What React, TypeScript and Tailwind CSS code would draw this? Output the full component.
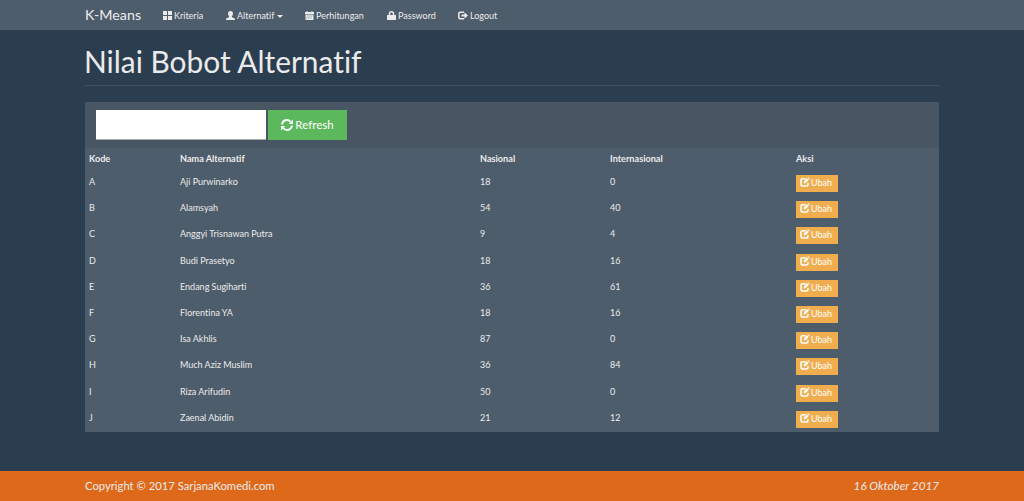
import React from 'react';

const rows: [string, string, number, number][] = [
  ['A', 'Aji Purwinarko', 18, 0],
  ['B', 'Alamsyah', 54, 40],
  ['C', 'Anggyi Trisnawan Putra', 9, 4],
  ['D', 'Budi Prasetyo', 18, 16],
  ['E', 'Endang Sugiharti', 36, 61],
  ['F', 'Florentina YA', 18, 16],
  ['G', 'Isa Akhlis', 87, 0],
  ['H', 'Much Aziz Muslim', 36, 84],
  ['I', 'Riza Arifudin', 50, 0],
  ['J', 'Zaenal Abidin', 21, 12],
];

function GridIcon() {
  return (
    <svg viewBox="0 0 18 18" className="h-[9px] w-[9px]" fill="currentColor">
      <path d="M0 0h8v8H0zM10 0h8v8h-8zM0 10h8v8H0zM10 10h8v8h-8z" />
    </svg>
  );
}

function UserIcon() {
  return (
    <svg viewBox="0 0 18 18" className="h-[9px] w-[9px]" fill="currentColor">
      <path d="M9 0c3.400 0 5 2 5 5 0 2.500-1 4.200-2.200 5.300v1.400c0 .8.500 1.200 1.300 1.500l3.600 1.400c.9.400 1.300 1 1.300 2V18H0v-1.400c0-1 .4-1.600 1.300-2l3.600-1.400c.8-.3 1.300-.7 1.300-1.500v-1.400C5 9.200 4 7.500 4 5c0-3 1.600-5 5-5z" />
    </svg>
  );
}

function CalendarIcon() {
  return (
    <svg viewBox="0 0 18 18" className="h-[9px] w-[9px]" fill="currentColor">
      <path d="M3 0h2v2h8V0h2v2h3v4H0V2h3z" />
      <path fillRule="evenodd" d="M1 7h16v11H1zM5 9v2h1.500V9zM9 9v2h1.500V9zM13 9v2h1.500V9zM3 13v2h1.500v-2zM7 13v2h1.500v-2zM11 13v2h1.500v-2z" />
    </svg>
  );
}

function LockIcon() {
  return (
    <svg viewBox="0 0 18 18" className="h-[9px] w-[9px]" fill="currentColor">
      <path fillRule="evenodd" d="M3.500 8V5.500a5.500 5.500 0 0 1 11 0V8H17a1 1 0 0 1 1 1v8a1 1 0 0 1-1 1H1a1 1 0 0 1-1-1V9a1 1 0 0 1 1-1zM6.500 8h5V5.500a2.500 2.500 0 0 0-5 0z" />
    </svg>
  );
}

function LogoutIcon() {
  return (
    <svg viewBox="0 0 20 18" className="h-[9px] w-[10px]" fill="currentColor">
      <path d="M12 1H4.500A4.500 4.500 0 0 0 0 5.500v7A4.500 4.500 0 0 0 4.500 17H12v-3H5a2 2 0 0 1-2-2V6a2 2 0 0 1 2-2h7zM13 2.500 20 9l-7 6.500V11H7V7h6z" />
    </svg>
  );
}

function RefreshIcon() {
  return (
    <svg viewBox="0 0 22 22" className="h-[12px] w-[12px]" fill="none" stroke="currentColor" strokeWidth="3.400">
      <path d="M2 10A8.800 8.800 0 0 1 17.500 5M20 12A8.800 8.800 0 0 1 4.500 17" />
      <path d="M22 1v8h-8zM0 21v-8h8z" fill="currentColor" stroke="none" />
    </svg>
  );
}

function EditIcon() {
  return (
    <svg viewBox="0 0 20 20" className="h-[10px] w-[10px]" fill="none" stroke="currentColor">
      <path d="M11.500 3.500H5a3 3 0 0 0-3 3V15a3 3 0 0 0 3 3h8a3 3 0 0 0 3-3v-3" strokeWidth="3" />
      <path d="m7 13 1-4.500 6-6 3.500 3.500-6 6zM15 1.200 16.200 0 20 3.800 18.800 5z" fill="currentColor" stroke="none" />
    </svg>
  );
}

function NavItem({ icon, label, className, caret }: { icon: React.ReactNode; label: string; className: string; caret?: boolean }) {
  return (
    <a className={`flex h-full shrink-0 items-center whitespace-nowrap ${className}`}>
      {icon}
      <span className="ml-[2px] mt-px">{label}</span>
      {caret && <span className="ml-[3px] mt-[3px] border-x-[3px] border-t-[3px] border-x-transparent border-t-[#ebebeb]" />}
    </a>
  );
}

export default function App() {
  return (
    <div className="flex h-[501px] flex-col overflow-hidden bg-[#2b3e50] font-['Lato',sans-serif] text-[11.250px] text-[#ebebeb] [font-variant-ligatures:none]">
      <nav className="h-[30px] shrink-0 bg-[#4e5d6c]">
        <div className="mx-auto flex h-full w-[854px] items-center text-[9px]">
          <a className="w-[78px] text-[14.250px]">K-Means</a>
          <NavItem className="w-[63px]" icon={<GridIcon />} label="Kriteria" />
          <NavItem className="w-[79px]" icon={<UserIcon />} label="Alternatif" caret />
          <NavItem className="w-[82px]" icon={<CalendarIcon />} label="Perhitungan" />
          <NavItem className="w-[71px]" icon={<LockIcon />} label="Password" />
          <NavItem className="w-[60px]" icon={<LogoutIcon />} label="Logout" />
        </div>
      </nav>
      <main className="mx-auto w-[854px] flex-1">
        <h1 className="mb-4 h-[56px] border-b border-[#415162] pt-[14px] -indent-px text-[29.900px] leading-[35px]">Nilai Bobot Alternatif</h1>
        <section className="bg-[#4e5d6c]">
          <div className="flex h-[46px] items-start bg-[#485563] pl-[11px] pt-[8px]">
            <input aria-label="Cari" className="h-[30px] w-[170px] border-b border-[#a7aeb5] bg-white" />
            <button className="ml-[2px] flex h-[30px] w-[79px] items-center justify-center gap-[2px] bg-[#5cb85c] text-[11.500px] text-white">
              <RefreshIcon />
              <span>Refresh</span>
            </button>
          </div>
          <table className="w-full table-fixed border-collapse text-left text-[9px] leading-[13px]">
            <colgroup>
              <col className="w-[91px]" />
              <col className="w-[300px]" />
              <col className="w-[130px]" />
              <col className="w-[186px]" />
              <col />
            </colgroup>
            <thead>
              <tr className="h-[22px] align-top">
                {['Kode', 'Nama Alternatif', 'Nasional', 'Internasional', 'Aksi'].map((h) => (
                  <th key={h} className="p-0 pl-1 pt-1 text-[9.150px] font-bold">{h}</th>
                ))}
              </tr>
            </thead>
            <tbody>
              {rows.map((r) => (
                <tr key={r[0]} className="h-[26.200px] align-top">
                  {r.map((v, i) => (
                    <td key={i} className="p-0 pl-1 pt-[5px]">{v}</td>
                  ))}
                  <td className="p-0 pl-1 pt-[5px]">
                    <button className="flex h-[17px] w-[41.500px] items-start gap-px bg-[#f0ad4e] pl-1 pt-px text-white">
                      <span className="pt-px"><EditIcon /></span>
                      <span>Ubah</span>
                    </button>
                  </td>
                </tr>
              ))}
            </tbody>
          </table>
        </section>
      </main>
      <footer className="h-[30px] shrink-0 bg-[#df691a]">
        <div className="mx-auto flex h-full w-[854px] items-center justify-between">
          <span>Copyright © 2017 SarjanaKomedi.com</span>
          <em className="text-[11.700px]">16 Oktober 2017</em>
        </div>
      </footer>
    </div>
  );
}
